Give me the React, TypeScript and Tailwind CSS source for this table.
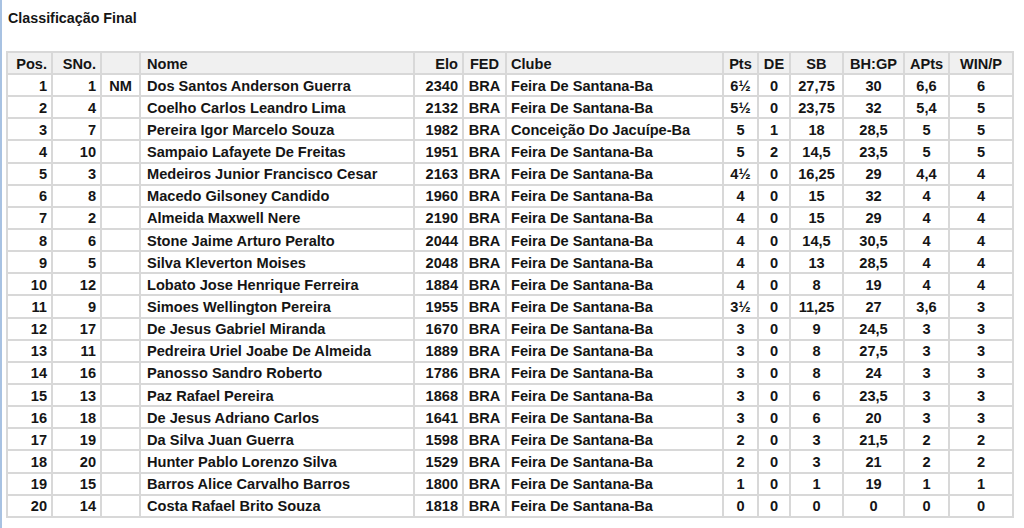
import React from "react";

type Row = [string, string, string, string, string, string, string, string, string, string, string, string, string];

const FS = "Feira De Santana-Ba";
const rows: Row[] = [
  ["1", "1", "NM", "Dos Santos Anderson Guerra", "2340", "BRA", FS, "6½", "0", "27,75", "30", "6,6", "6"],
  ["2", "4", "", "Coelho Carlos Leandro Lima", "2132", "BRA", FS, "5½", "0", "23,75", "32", "5,4", "5"],
  ["3", "7", "", "Pereira Igor Marcelo Souza", "1982", "BRA", "Conceição Do Jacuípe-Ba", "5", "1", "18", "28,5", "5", "5"],
  ["4", "10", "", "Sampaio Lafayete De Freitas", "1951", "BRA", FS, "5", "2", "14,5", "23,5", "5", "5"],
  ["5", "3", "", "Medeiros Junior Francisco Cesar", "2163", "BRA", FS, "4½", "0", "16,25", "29", "4,4", "4"],
  ["6", "8", "", "Macedo Gilsoney Candido", "1960", "BRA", FS, "4", "0", "15", "32", "4", "4"],
  ["7", "2", "", "Almeida Maxwell Nere", "2190", "BRA", FS, "4", "0", "15", "29", "4", "4"],
  ["8", "6", "", "Stone Jaime Arturo Peralto", "2044", "BRA", FS, "4", "0", "14,5", "30,5", "4", "4"],
  ["9", "5", "", "Silva Kleverton Moises", "2048", "BRA", FS, "4", "0", "13", "28,5", "4", "4"],
  ["10", "12", "", "Lobato Jose Henrique Ferreira", "1884", "BRA", FS, "4", "0", "8", "19", "4", "4"],
  ["11", "9", "", "Simoes Wellington Pereira", "1955", "BRA", FS, "3½", "0", "11,25", "27", "3,6", "3"],
  ["12", "17", "", "De Jesus Gabriel Miranda", "1670", "BRA", FS, "3", "0", "9", "24,5", "3", "3"],
  ["13", "11", "", "Pedreira Uriel Joabe De Almeida", "1889", "BRA", FS, "3", "0", "8", "27,5", "3", "3"],
  ["14", "16", "", "Panosso Sandro Roberto", "1786", "BRA", FS, "3", "0", "8", "24", "3", "3"],
  ["15", "13", "", "Paz Rafael Pereira", "1868", "BRA", FS, "3", "0", "6", "23,5", "3", "3"],
  ["16", "18", "", "De Jesus Adriano Carlos", "1641", "BRA", FS, "3", "0", "6", "20", "3", "3"],
  ["17", "19", "", "Da Silva Juan Guerra", "1598", "BRA", FS, "2", "0", "3", "21,5", "2", "2"],
  ["18", "20", "", "Hunter Pablo Lorenzo Silva", "1529", "BRA", FS, "2", "0", "3", "21", "2", "2"],
  ["19", "15", "", "Barros Alice Carvalho Barros", "1800", "BRA", FS, "1", "0", "1", "19", "1", "1"],
  ["20", "14", "", "Costa Rafael Brito Souza", "1818", "BRA", FS, "0", "0", "0", "0", "0", "0"],
];

const headers = ["Pos.", "SNo.", "", "Nome", "Elo", "FED", "Clube", "Pts", "DE", "SB", "BH:GP", "APts", "WIN/P"];
const widths = [45, 49, 39, 274, 49, 43, 217, 35, 32, 53, 61, 45, 64];
const align = [
  "text-right pr-[4px]",
  "text-right pr-[4px]",
  "text-center",
  "text-left pl-[6px]",
  "text-right pr-[4px]",
  "text-center",
  "text-left pl-[4px]",
  "text-center",
  "text-center",
  "text-center",
  "text-center",
  "text-center",
  "text-center",
];

export default function App() {
  return (
    <div
      className="w-[1024px] h-[528px] bg-white border-l-[2px] border-[#a8c2e2] overflow-hidden text-[#151515]"
      style={{ fontFamily: '"Liberation Sans", Arial, sans-serif' }}
    >
      <div className="pl-[6px] pt-[10px] h-[51px] text-[14.3px] font-bold leading-[17px]">Classificação Final</div>
      <table className="ml-[4px] table-fixed border-collapse w-[1006px] text-[14.6px] font-bold">
        <colgroup>
          {widths.map((w, i) => (
            <col key={i} style={{ width: w }} />
          ))}
        </colgroup>
        <thead>
          <tr className="bg-[#f0f0f0]">
            {headers.map((h, i) => (
              <th
                key={i}
                className={`border-[2px] border-[#d8d8d8] h-[22px] p-0 pt-[1px] font-bold leading-[16px] whitespace-nowrap ${align[i]}`}
              >
                {h}
              </th>
            ))}
          </tr>
        </thead>
        <tbody>
          {rows.map((r, ri) => (
            <tr key={ri}>
              {r.map((c, ci) => (
                <td
                  key={ci}
                  className={`border-[2px] border-[#d8d8d8] h-[22.15px] p-0 pt-[1px] leading-[16px] whitespace-nowrap ${align[ci]}`}
                >
                  {c}
                </td>
              ))}
            </tr>
          ))}
        </tbody>
      </table>
    </div>
  );
}
